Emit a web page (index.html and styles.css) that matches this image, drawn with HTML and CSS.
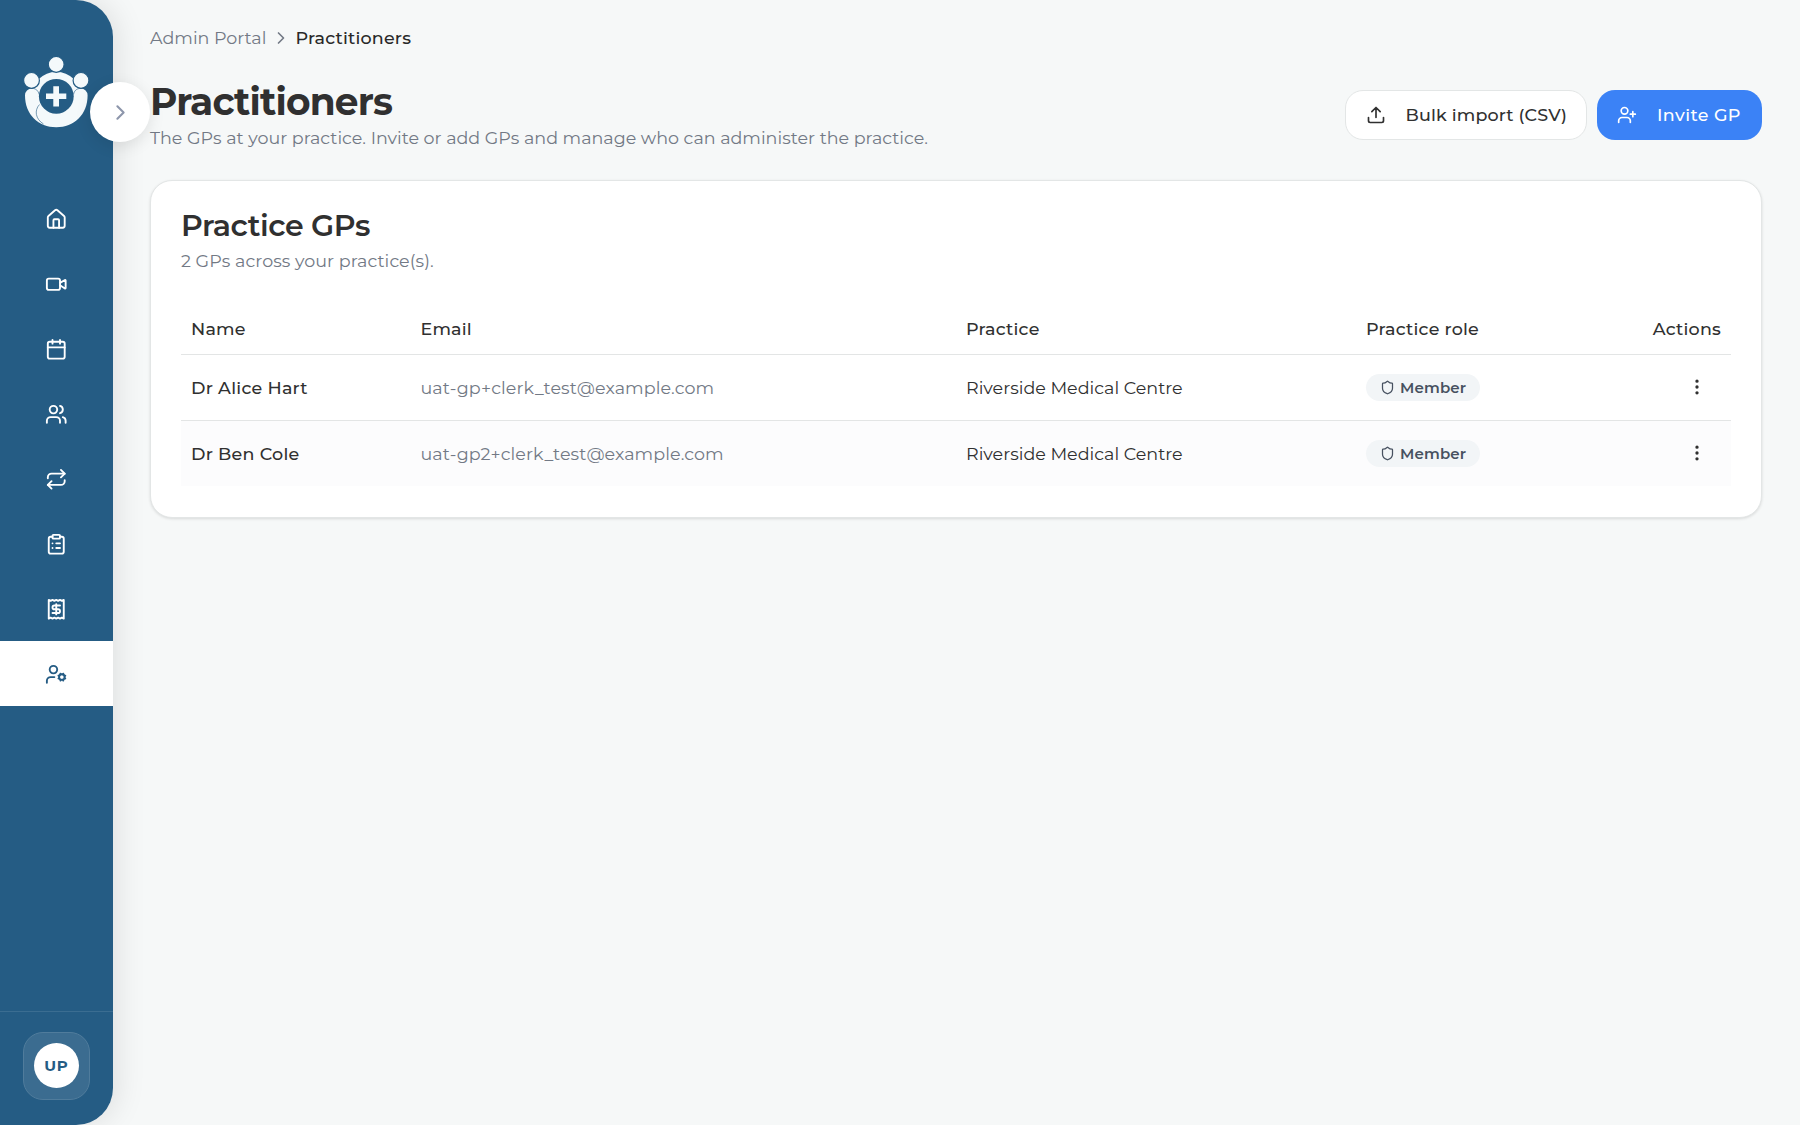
FILE: index.html
```
<!DOCTYPE html>
<html lang="en">
<head>
  <meta charset="UTF-8">
  <meta name="viewport" content="width=device-width, initial-scale=1.0">
  <title>Practitioners</title>
  <link rel="stylesheet" href="styles.css">
</head>
<body>
  <aside class="sidebar">
    <div class="logo">
      <svg width="66" height="72" viewBox="23 56 66 72">
        <!-- shoulders and arms -->
        <circle cx="56.3" cy="96.5" r="24.7" fill="#f4f9fb"/>
        <path d="M25 95.2a6.8 6.8 0 0 1 13.6 0h35.4a6.8 6.8 0 0 1 13.6 0c0 19.5-13.5 32-31.3 32S25 114.7 25 95.2z" fill="#f4f9fb"/>
        <path d="M32 88.4c4 0 6.5 2.5 7 6M80.6 88.4c-4 0-6.5 2.5-7 6" fill="none" stroke="#255c84" stroke-width="0.6"/>
        <path d="M39.5 104.5c-5.5 6-4 14.5 4 19.5" fill="none" stroke="#255c84" stroke-width="0.6"/>
        <circle cx="56.3" cy="96.3" r="17.4" fill="#255c84"/>
        <!-- heads -->
        <g fill="#f4f9fb" stroke="#255c84" stroke-width="1.2">
          <circle cx="56.2" cy="64.4" r="7.9"/>
          <circle cx="31.5" cy="80.4" r="7.9"/>
          <circle cx="81" cy="80.4" r="7.9"/>
        </g>
        <path d="M53.3 86.2h5.7v7.2h7.3v5.7h-7.3v7.3h-5.7v-7.3h-7.3v-5.7h7.3z" fill="#f4f9fb"/>
      </svg>
    </div>

    <nav class="nav">
      <a class="nav-item" href="#">
        <svg class="icon" viewBox="0 0 24 24"><path d="M15 21v-8a1 1 0 0 0-1-1h-4a1 1 0 0 0-1 1v8"/><path d="M3 10a2 2 0 0 1 .709-1.528l7-5.999a2 2 0 0 1 2.582 0l7 5.999A2 2 0 0 1 21 10v9a2 2 0 0 1-2 2H5a2 2 0 0 1-2-2z"/></svg>
      </a>
      <a class="nav-item" href="#">
        <svg class="icon" viewBox="0 0 24 24"><path d="m16 13 5.223 3.482a.5.5 0 0 0 .777-.416V7.87a.5.5 0 0 0-.752-.432L16 10.5"/><rect x="2" y="6" width="14" height="12" rx="2"/></svg>
      </a>
      <a class="nav-item" href="#">
        <svg class="icon" viewBox="0 0 24 24"><path d="M8 2v4M16 2v4"/><rect width="18" height="18" x="3" y="4" rx="2"/><path d="M3 10h18"/></svg>
      </a>
      <a class="nav-item" href="#">
        <svg class="icon" viewBox="0 0 24 24"><path d="M16 21v-2a4 4 0 0 0-4-4H6a4 4 0 0 0-4 4v2"/><circle cx="9" cy="7" r="4"/><path d="M22 21v-2a4 4 0 0 0-3-3.87M16 3.13a4 4 0 0 1 0 7.75"/></svg>
      </a>
      <a class="nav-item" href="#">
        <svg class="icon" viewBox="0 0 24 24"><path d="m17 2 4 4-4 4"/><path d="M3 11v-1a4 4 0 0 1 4-4h14"/><path d="m7 22-4-4 4-4"/><path d="M21 13v1a4 4 0 0 1-4 4H3"/></svg>
      </a>
      <a class="nav-item" href="#">
        <svg class="icon" viewBox="0 0 24 24"><rect width="8" height="4" x="8" y="2" rx="1"/><path d="M16 4h2a2 2 0 0 1 2 2v14a2 2 0 0 1-2 2H6a2 2 0 0 1-2-2V6a2 2 0 0 1 2-2h2"/><path d="M12 11h4M12 16h4M8 11h.01M8 16h.01"/></svg>
      </a>
      <a class="nav-item" href="#">
        <svg class="icon" viewBox="0 0 24 24"><path d="M4 2v20l2-1 2 1 2-1 2 1 2-1 2 1 2-1 2 1V2l-2 1-2-1-2 1-2-1-2 1-2-1-2 1Z"/><path d="M16 8h-6a2 2 0 1 0 0 4h4a2 2 0 1 1 0 4H8"/><path d="M12 17.5v-11"/></svg>
      </a>
      <a class="nav-item active" href="#">
        <svg class="icon" viewBox="0 0 24 24"><path d="M10 15H6a4 4 0 0 0-4 4v2"/><circle cx="9" cy="7" r="4"/><circle cx="18" cy="15" r="3"/><path d="m14.305 16.53.923-.382M15.228 13.852l-.923-.383M16.852 12.228l-.383-.923M16.852 17.772l-.383.924M19.148 12.228l.383-.923M19.53 18.696l-.382-.924M20.772 13.852l.924-.383M20.772 16.148l.924.383"/></svg>
      </a>
    </nav>

    <div class="account">
      <div class="account-box">
        <div class="avatar">UP</div>
      </div>
    </div>

    <button class="toggle" aria-label="Expand sidebar">
      <svg class="icon" viewBox="0 0 24 24"><path d="m9 18 6-6-6-6"/></svg>
    </button>
  </aside>

  <main class="main">
    <div class="breadcrumb">
      <a href="#">Admin Portal</a>
      <svg class="icon" viewBox="0 0 24 24"><path d="m9 18 6-6-6-6"/></svg>
      <span class="current">Practitioners</span>
    </div>

    <header class="page-header">
      <div>
        <h1>Practitioners</h1>
        <p class="description">The GPs at your practice. Invite or add GPs and manage who can administer the practice.</p>
      </div>
      <div class="buttons">
        <button class="btn btn-outline">
          <svg class="icon" viewBox="0 0 24 24"><path d="M12 3v12M17 8l-5-5-5 5M21 15v4a2 2 0 0 1-2 2H5a2 2 0 0 1-2-2v-4"/></svg>
          <span>Bulk import (CSV)</span>
        </button>
        <button class="btn btn-primary">
          <svg class="icon" viewBox="0 0 24 24"><path d="M16 21v-2a4 4 0 0 0-4-4H6a4 4 0 0 0-4 4v2"/><circle cx="9" cy="7" r="4"/><path d="M19 8v6M22 11h-6"/></svg>
          <span>Invite GP</span>
        </button>
      </div>
    </header>

    <section class="card">
      <h2>Practice GPs</h2>
      <p class="card-subtitle">2 GPs across your practice(s).</p>
      <table>
        <thead>
          <tr>
            <th class="col-name">Name</th>
            <th class="col-email">Email</th>
            <th class="col-practice">Practice</th>
            <th class="col-role">Practice role</th>
            <th class="col-actions">Actions</th>
          </tr>
        </thead>
        <tbody>
          <tr>
            <td class="name">Dr Alice Hart</td>
            <td class="email">uat-gp+clerk_test@example.com</td>
            <td>Riverside Medical Centre</td>
            <td>
              <span class="badge">
                <svg class="icon" viewBox="0 0 24 24"><path d="M20 13c0 5-3.5 7.5-7.66 8.95a1 1 0 0 1-.67-.01C7.5 20.5 4 18 4 13V6a1 1 0 0 1 1-1c2 0 4.5-1.2 6.24-2.72a1.17 1.17 0 0 1 1.52 0C14.51 3.81 17 5 19 5a1 1 0 0 1 1 1z"/></svg>
                Member
              </span>
            </td>
            <td class="actions">
              <svg class="icon" viewBox="0 0 24 24"><circle cx="12" cy="12" r="1"/><circle cx="12" cy="5" r="1"/><circle cx="12" cy="19" r="1"/></svg>
            </td>
          </tr>
          <tr>
            <td class="name">Dr Ben Cole</td>
            <td class="email">uat-gp2+clerk_test@example.com</td>
            <td>Riverside Medical Centre</td>
            <td>
              <span class="badge">
                <svg class="icon" viewBox="0 0 24 24"><path d="M20 13c0 5-3.5 7.5-7.66 8.95a1 1 0 0 1-.67-.01C7.5 20.5 4 18 4 13V6a1 1 0 0 1 1-1c2 0 4.5-1.2 6.24-2.72a1.17 1.17 0 0 1 1.52 0C14.51 3.81 17 5 19 5a1 1 0 0 1 1 1z"/></svg>
                Member
              </span>
            </td>
            <td class="actions">
              <svg class="icon" viewBox="0 0 24 24"><circle cx="12" cy="12" r="1"/><circle cx="12" cy="5" r="1"/><circle cx="12" cy="19" r="1"/></svg>
            </td>
          </tr>
        </tbody>
      </table>
    </section>
  </main>
</body>
</html>
```

FILE: styles.css
```
/* General Styles */
* {
  box-sizing: border-box;
}

body {
  margin: 0;
  height: 100vh;
  display: flex;
  background: #f6f8f8;
  color: #303030;
  font-family: Montserrat, Inter, sans-serif;
  font-size: 17.5px;
  line-height: 25px;
}

h1, h2, p {
  margin: 0;
}

a {
  color: inherit;
  text-decoration: none;
}

button {
  font: inherit;
  border: none;
  cursor: pointer;
}

.icon {
  display: block;
  flex-shrink: 0;
  width: 22.5px;
  height: 22.5px;
  fill: none;
  stroke: currentColor;
  stroke-width: 2;
  stroke-linecap: round;
  stroke-linejoin: round;
}

/* Sidebar */
.sidebar {
  position: relative;
  display: flex;
  flex-direction: column;
  flex-shrink: 0;
  width: 112.5px;
  background: #255c84;
  border-radius: 0 37px 37px 0;
  box-shadow: 4px 0 30px rgba(0, 0, 0, 0.1);
  color: #fff;
}

.logo {
  display: flex;
  justify-content: center;
  height: 186px;
  padding-top: 56px;
}

.nav {
  flex: 1;
}

.nav-item {
  display: flex;
  align-items: center;
  justify-content: center;
  height: 65px;
  padding-top: 0.5px;
}

.nav-item.active {
  background: #fff;
  color: #255c84;
}

.account {
  display: flex;
  justify-content: center;
  height: 114px;
  padding-top: 20px;
  border-top: 1px solid #3b6d91;
}

.account-box {
  display: flex;
  align-items: center;
  justify-content: center;
  width: 67.5px;
  height: 67.5px;
  background: #3b6c90;
  border: 1px solid #507c9c;
  border-radius: 20px;
}

.avatar {
  width: 45px;
  height: 45px;
  border-radius: 50%;
  background: #fff;
  color: #255c84;
  font-size: 15px;
  font-weight: 700;
  letter-spacing: 0.6px;
  line-height: 45px;
  text-align: center;
}

/* Sits half over the sidebar edge */
.toggle {
  position: absolute;
  top: 82px;
  right: -37.5px;
  display: flex;
  align-items: center;
  justify-content: center;
  width: 60px;
  height: 60px;
  padding: 0;
  border-radius: 50%;
  background: #fff;
  color: #8d96ab;
  box-shadow: 0 4px 16px rgba(0, 0, 0, 0.1);
}

.toggle .icon {
  width: 25px;
  height: 25px;
}

/* Main content */
.main {
  flex: 1;
  padding: 25px 38px 0 37.5px;
}

.breadcrumb {
  display: flex;
  align-items: center;
  gap: 4.5px;
  color: #727985;
}

.breadcrumb .icon {
  width: 20px;
  height: 20px;
}

.breadcrumb .current {
  color: #282828;
  font-weight: 500;
  letter-spacing: 0.2px;
}

.page-header {
  display: flex;
  justify-content: space-between;
  margin-top: 28px;
}

h1 {
  font-size: 37.5px;
  font-weight: 700;
  letter-spacing: -0.85px;
  line-height: 47px;
}

.description {
  color: #727985;
}

.buttons {
  display: flex;
  gap: 10px;
  padding-top: 12px;
}

.btn {
  display: flex;
  align-items: center;
  gap: 20px;
  height: 50px;
  padding: 0 20px 1px;
  border-radius: 18px;
  font-weight: 500;
  letter-spacing: 0.15px;
  white-space: nowrap;
}

.btn .icon {
  width: 20px;
  height: 20px;
}

.btn-outline {
  width: 242.5px;
  background: #fff;
  border: 1px solid #e3e6e6;
  color: #303030;
}

.btn-primary {
  width: 165px;
  background: #3b82f6;
  color: #fff;
  letter-spacing: 0.4px;
}

/* Card */
.card {
  height: 338px;
  margin-top: 30px;
  padding: 30px;
  background: #fff;
  border: 1px solid #e3e6e6;
  border-radius: 22px;
  box-shadow: 0 1px 3px rgba(0, 0, 0, 0.12);
}

h2 {
  font-size: 30px;
  font-weight: 600;
  letter-spacing: -0.45px;
  line-height: 30px;
}

.card-subtitle {
  margin-top: 7px;
  color: #727985;
  letter-spacing: 0.05px;
}

/* Table */
table {
  width: 100%;
  margin-top: 30px;
  border-collapse: collapse;
  table-layout: fixed;
}

th, td {
  padding: 0 10px;
  text-align: left;
  white-space: nowrap;
}

th {
  height: 51px;
  font-weight: 500;
  letter-spacing: 0.2px;
}

td {
  height: 66px;
}

thead tr,
tbody tr:first-child {
  border-bottom: 1px solid #e3e5e5;
}

tbody tr:nth-child(even) {
  background: #fcfcfd;
}

.col-name {
  width: 229.5px;
}

.col-email {
  width: 545.5px;
}

.col-practice {
  width: 400px;
}

.col-role {
  width: 200px;
}

.col-actions {
  text-align: right;
}

.name {
  font-weight: 500;
  letter-spacing: 0.25px;
}

.email {
  color: #727985;
  letter-spacing: 0.08px;
}

.badge {
  display: inline-flex;
  align-items: center;
  gap: 5px;
  height: 27.5px;
  width: 114px;
  padding-left: 14px;
  border-radius: 14px;
  background: #f2f5f7;
  color: #475160;
  font-size: 15px;
  font-weight: 600;
  letter-spacing: 0.15px;
  vertical-align: middle;
}

.badge .icon {
  width: 15px;
  height: 15px;
}

.actions .icon {
  width: 20px;
  height: 20px;
  margin: 0 14.5px 0 auto;
}
```
